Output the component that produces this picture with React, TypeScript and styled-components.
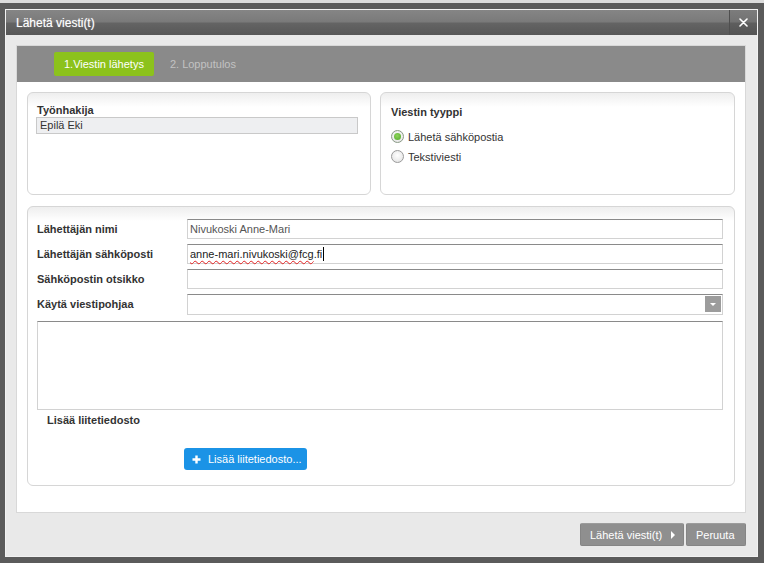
import React from 'react';
import styled, { createGlobalStyle } from 'styled-components';

const GlobalStyle = createGlobalStyle`
  html, body {
    margin: 0;
    padding: 0;
    background: #5b5b5b;
    font-family: "Liberation Sans", Arial, sans-serif;
  }
  * {
    box-sizing: border-box;
  }
`;

const Page = styled.div`
  width: 764px;
  height: 563px;
  overflow: hidden;
  background: #5b5b5b;
  display: flex;
  flex-direction: column;
`;

const TopStrip = styled.div`
  height: 3px;
  background: #dcdcdc;
`;

const Modal = styled.div`
  margin: 6px 0 0 5px;
  width: 753px;
  height: 548px;
  border: 1px solid #f2f2f2;
  display: flex;
  flex-direction: column;
`;

const TitleBar = styled.div`
  height: 25px;
  display: flex;
  align-items: stretch;
  background: linear-gradient(#858585 0%, #7a7a7a 48%, #646464 52%, #575757 100%);
`;

const Title = styled.div`
  flex: 1;
  padding-left: 10px;
  display: flex;
  align-items: center;
  color: #fff;
  font-size: 12px;
  text-shadow: 0 0 1px rgba(255, 255, 255, 0.5);
`;

const CloseButton = styled.div`
  width: 28px;
  border-left: 1px solid #4f4f4f;
  display: flex;
  align-items: center;
  justify-content: center;
  background: linear-gradient(#7c7c7c 0%, #727272 48%, #5e5e5e 52%, #535353 100%);
`;

const Body = styled.div`
  flex: 1;
  background: #e9e9e9;
  padding: 10px 11px 0 10px;
  display: flex;
  flex-direction: column;
`;

const MainPanel = styled.div`
  height: 468px;
  background: #fff;
  border: 1px solid #d8d8d8;
  display: flex;
  flex-direction: column;
`;

const StepBar = styled.div`
  height: 36px;
  background: #8a8a8a;
  display: flex;
  align-items: flex-start;
  padding: 6px 0 0 37px;
`;

const Step = styled.div<{ $active?: boolean }>`
  height: 24px;
  line-height: 24px;
  padding: 0 10px;
  margin-right: ${({ $active }) => ($active ? '6px' : '0')};
  font-size: 11px;
  color: ${({ $active }) => ($active ? '#fff' : '#c2c2c2')};
  background: ${({ $active }) => ($active ? '#8cc21c' : 'transparent')};
  border-radius: 2px;
`;

const Content = styled.div`
  padding: 10px 10px 0 10px;
  display: flex;
  flex-direction: column;
`;

const TopRow = styled.div`
  display: flex;
  gap: 9px;
`;

const Box = styled.div<{ $width?: number; $height: number }>`
  width: ${({ $width }) => ($width ? `${$width}px` : 'auto')};
  height: ${({ $height }) => $height}px;
  border: 1px solid #d6d6d6;
  border-radius: 6px;
  background: linear-gradient(#eeeeee 0px, #ffffff 14px);
`;

const ApplicantBox = styled(Box)`
  padding: 11px 12px 0 8px;
`;

const TypeBox = styled(Box)`
  padding: 13px 10px 0 10px;
`;

const Label = styled.div<{ $indent?: number }>`
  font-size: 11px;
  font-weight: bold;
  color: #333;
  line-height: 13px;
  padding-left: ${({ $indent }) => $indent || 0}px;
`;

const ReadOnlyField = styled.div`
  height: 17px;
  background: #eeeff1;
  border: 1px solid #c9c9c9;
  font-size: 11px;
  color: #333;
  line-height: 15px;
  padding-left: 3px;
`;

const RadioList = styled.div`
  margin-top: 11px;
  display: flex;
  flex-direction: column;
  gap: 7px;
`;

const RadioRow = styled.div`
  display: flex;
  align-items: center;
  gap: 4px;
  font-size: 11px;
  color: #333;
  height: 13px;
`;

const RadioCircle = styled.span<{ $checked?: boolean }>`
  width: 13px;
  height: 13px;
  border-radius: 50%;
  border: 1px solid ${({ $checked }) => ($checked ? '#8a9a86' : '#9a9a9a')};
  background: radial-gradient(circle at 50% 40%, #ffffff 0%, #e9e9e9 70%, #d6d6d6 100%);
  display: flex;
  align-items: center;
  justify-content: center;

  &::after {
    content: '';
    display: ${({ $checked }) => ($checked ? 'block' : 'none')};
    width: 7px;
    height: 7px;
    border-radius: 50%;
    background: radial-gradient(circle at 45% 40%, #8ed45a 0%, #4fa82a 100%);
  }
`;

const FormBox = styled(Box)`
  margin-top: 11px;
  padding: 12px 11px 0 9px;
  display: flex;
  flex-direction: column;
`;

const FormRows = styled.div`
  display: flex;
  flex-direction: column;
  gap: 5px;
`;

const FormRow = styled.div`
  display: flex;
  align-items: center;
`;

const RowLabel = styled(Label)`
  width: 150px;
  flex-shrink: 0;
`;

const Field = styled.div<{ $height?: number; $muted?: boolean }>`
  position: relative;
  flex: 1;
  height: ${({ $height }) => $height || 20}px;
  border: 1px solid #d2d2d2;
  border-top-color: #8a8a8a;
  font-size: 11px;
  line-height: 18px;
  padding-left: 2px;
  color: ${({ $muted }) => ($muted ? '#555' : '#222')};
  display: flex;
  align-items: center;
`;

const Misspelled = styled.span`
  text-decoration: underline wavy #e02020;
  text-decoration-thickness: 1px;
  text-underline-offset: 2px;
`;

const Caret = styled.span`
  display: inline-block;
  width: 1px;
  height: 14px;
  background: #000;
  margin-left: 1px;
`;

const SelectArrow = styled.span`
  position: absolute;
  right: 1px;
  top: 1px;
  width: 16px;
  height: 16px;
  background: #9c9c9c;
  display: flex;
  align-items: center;
  justify-content: center;

  &::after {
    content: '';
    border-left: 3px solid transparent;
    border-right: 3px solid transparent;
    border-top: 3px solid #fff;
  }
`;

const TextArea = styled.div`
  margin-top: 6px;
  height: 89px;
  border: 1px solid #d2d2d2;
  border-top-color: #8a8a8a;
`;

const AttachLabel = styled(Label)`
  margin-top: 4px;
  padding-left: 10px;
`;

const BlueButton = styled.div`
  margin: 21px 0 0 147px;
  width: 123px;
  height: 22px;
  border-radius: 3px;
  background: #1b93e6;
  color: #fff;
  font-size: 11px;
  display: flex;
  align-items: center;
  padding-left: 8px;
  gap: 7px;
`;

const Footer = styled.div`
  display: flex;
  justify-content: flex-end;
  padding-top: 10px;
  gap: 2px;
`;

const GrayButton = styled.div<{ $width: number }>`
  width: ${({ $width }) => $width}px;
  height: 23px;
  background: #8f8f8f;
  border: 1px solid #858585;
  border-top-color: #9c9c9c;
  border-radius: 2px;
  color: #fff;
  font-size: 11px;
  display: flex;
  align-items: center;
  justify-content: space-between;
  padding: 0 8px 0 9px;
`;

const PlayArrow = styled.span`
  width: 0;
  height: 0;
  border-top: 4px solid transparent;
  border-bottom: 4px solid transparent;
  border-left: 4px solid #fff;
`;

const CloseIcon = () => (
  <svg width="9" height="9" viewBox="0 0 9 9">
    <path d="M1 1 L8 8 M8 1 L1 8" stroke="#fff" strokeWidth="1.6" strokeLinecap="round" />
  </svg>
);

const PlusIcon = () => (
  <svg width="9" height="9" viewBox="0 0 9 9">
    <path d="M4.5 0.5 V8.5 M0.5 4.5 H8.5" stroke="#fff" strokeWidth="2.4" />
  </svg>
);

export default function App() {
  return (
    <>
      <GlobalStyle />
      <Page>
        <TopStrip />
        <Modal>
          <TitleBar>
            <Title>Lähetä viesti(t)</Title>
            <CloseButton>
              <CloseIcon />
            </CloseButton>
          </TitleBar>
          <Body>
            <MainPanel>
              <StepBar>
                <Step $active>1.Viestin lähetys</Step>
                <Step>2. Lopputulos</Step>
              </StepBar>
              <Content>
                <TopRow>
                  <ApplicantBox $width={344} $height={103}>
                    <Label $indent={1}>Työnhakija</Label>
                    <ReadOnlyField>Epilä Eki</ReadOnlyField>
                  </ApplicantBox>
                  <TypeBox $width={355} $height={103}>
                    <Label>Viestin tyyppi</Label>
                    <RadioList>
                      <RadioRow>
                        <RadioCircle $checked />
                        Lähetä sähköpostia
                      </RadioRow>
                      <RadioRow>
                        <RadioCircle />
                        Tekstiviesti
                      </RadioRow>
                    </RadioList>
                  </TypeBox>
                </TopRow>
                <FormBox $height={280}>
                  <FormRows>
                    <FormRow>
                      <RowLabel>Lähettäjän nimi</RowLabel>
                      <Field $muted>Nivukoski Anne-Mari</Field>
                    </FormRow>
                    <FormRow>
                      <RowLabel>Lähettäjän sähköposti</RowLabel>
                      <Field>
                        <Misspelled>anne-mari.nivukoski@fcg</Misspelled>.fi
                        <Caret />
                      </Field>
                    </FormRow>
                    <FormRow>
                      <RowLabel>Sähköpostin otsikko</RowLabel>
                      <Field />
                    </FormRow>
                    <FormRow>
                      <RowLabel>Käytä viestipohjaa</RowLabel>
                      <Field $height={21}>
                        <SelectArrow />
                      </Field>
                    </FormRow>
                  </FormRows>
                  <TextArea />
                  <AttachLabel>Lisää liitetiedosto</AttachLabel>
                  <BlueButton>
                    <PlusIcon />
                    Lisää liitetiedosto...
                  </BlueButton>
                </FormBox>
              </Content>
            </MainPanel>
            <Footer>
              <GrayButton $width={104}>
                Lähetä viesti(t)
                <PlayArrow />
              </GrayButton>
              <GrayButton $width={60}>Peruuta</GrayButton>
            </Footer>
          </Body>
        </Modal>
      </Page>
    </>
  );
}
